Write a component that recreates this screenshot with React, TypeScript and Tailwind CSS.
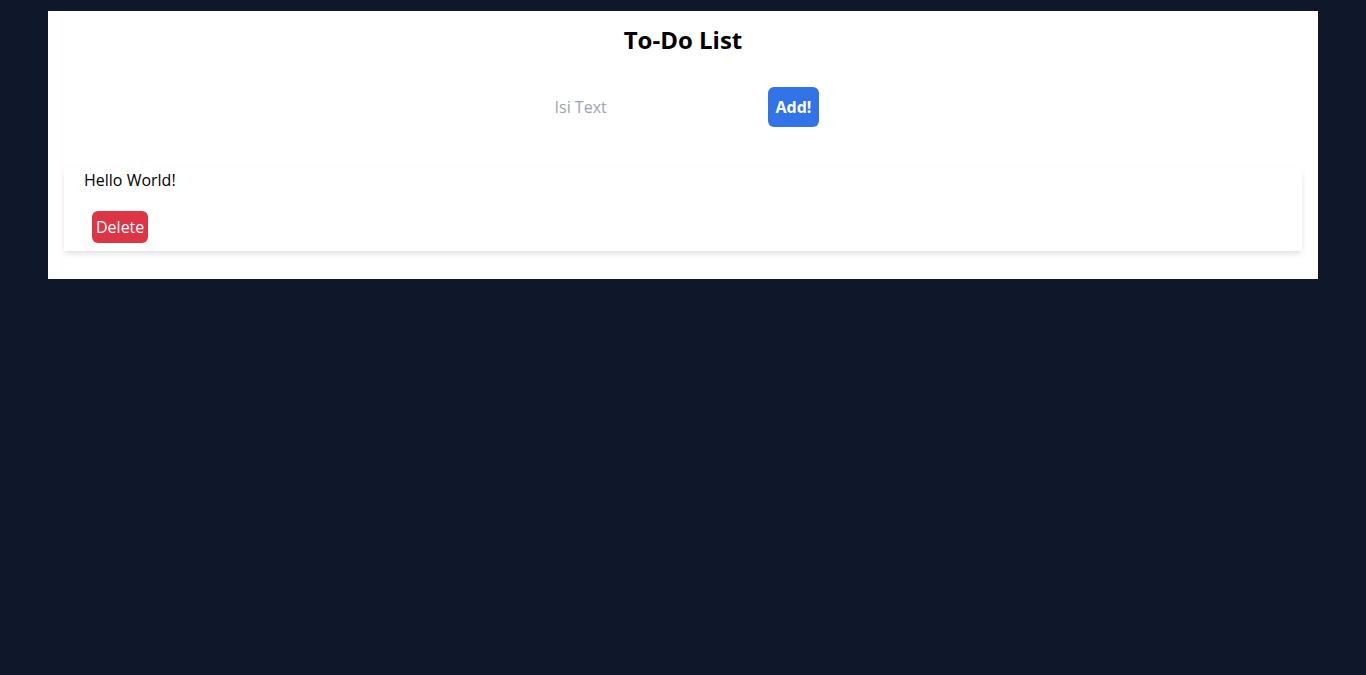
import { useState } from "react";

interface Todo {
  id: number;
  text: string;
}

const App = () => {
  const [todos, setTodos] = useState<Todo[]>([{ id: 1, text: "Hello World!" }]);
  const [input, setInput] = useState("");

  const addTodo = () => {
    if (!input.trim()) return;
    setTodos((prev) => [...prev, { id: Date.now(), text: input }]);
    setInput("");
  };

  const deleteTodo = (id: number) => {
    setTodos((prev) => prev.filter((t) => t.id !== id));
  };

  return (
    <div className="min-h-screen bg-[#0f172a] pt-[11px] px-[48px] font-['Open_Sans','Noto_Sans',sans-serif]">
      <div className="bg-white px-4 pt-[13px] pb-[28px]">
        <h1 className="text-center text-[24px] leading-[32px] font-bold text-black">To-Do List</h1>

        {/* Input row */}
        <div className="flex justify-center items-center gap-2 mt-[31px]">
          <input
            value={input}
            onChange={(e) => setInput(e.target.value)}
            placeholder="Isi Text"
            className="w-[213px] h-10 px-2 text-[16px] outline-none placeholder:text-[#9ca3af]"
          />
          <button
            onClick={addTodo}
            className="h-10 px-2 rounded-md bg-[#3273e8] text-white font-bold text-[16px]"
          >
            Add!
          </button>
        </div>

        {/* Todo list */}
        <div className="mt-[41px] flex flex-col gap-4">
          {todos.map((todo) => (
            <div key={todo.id} className="shadow-[0_3px_6px_-1px_rgba(0,0,0,0.15)] px-5 pt-0 pb-2">
              <p className="text-[16px] leading-6 text-black">{todo.text}</p>
              <button
                onClick={() => deleteTodo(todo.id)}
                className="mt-[19px] ml-2 h-8 px-1 rounded-md bg-[#dc3545] text-white text-[16px]"
              >
                Delete
              </button>
            </div>
          ))}
        </div>
      </div>
    </div>
  );
};

export default App;
